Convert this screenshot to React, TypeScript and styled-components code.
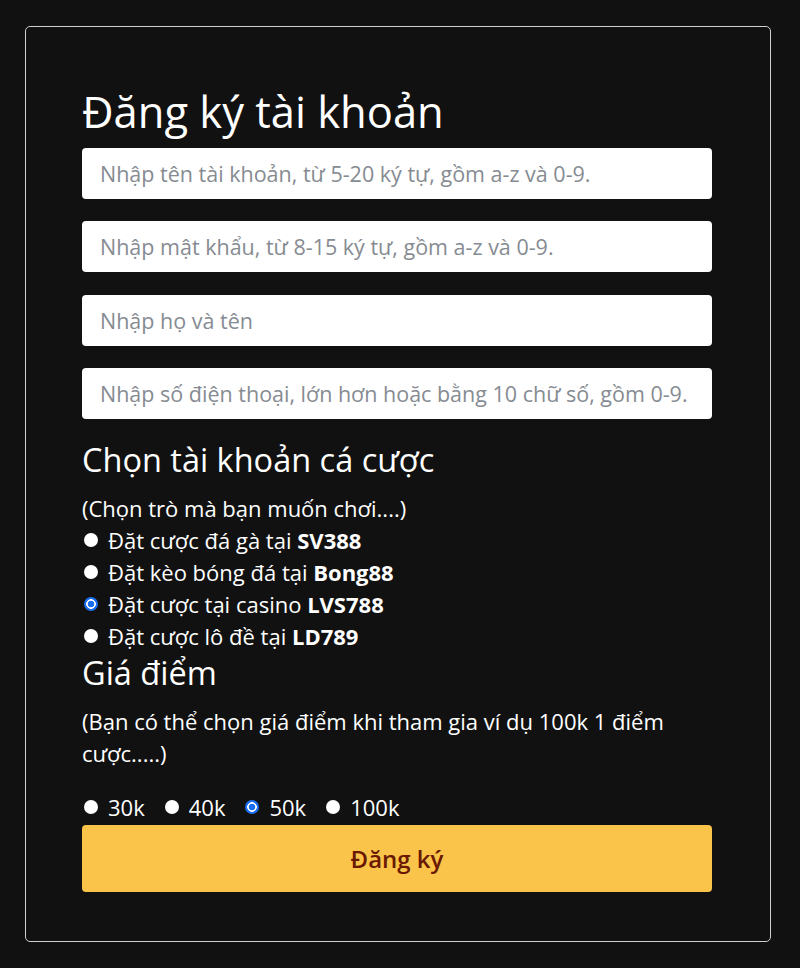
import styled, { createGlobalStyle } from "styled-components";

const GlobalStyle = createGlobalStyle`
    body {
        margin: 0;
        background-color: #111111;
        font-family: "Open Sans", "Noto Sans", sans-serif;
        color: #ffffff;
    }
`;

const Page = styled.div`
    padding: 26px 29px 27px 25px;
`;

const Card = styled.form`
    width: 746px;
    box-sizing: border-box;
    border: 1px solid #cfcfcf;
    border-radius: 5px;
    padding: 59px 58px 49px 56px;
    display: flex;
    flex-direction: column;
`;

const Title = styled.h1`
    margin: 0 0 9.5px;
    font-size: 43.5px;
    font-weight: 400;
    line-height: 1.2;
`;

const Field = styled.input`
    width: 100%;
    height: 51px;
    box-sizing: border-box;
    margin-bottom: 22.5px;
    padding: 0 18px;
    border: none;
    border-radius: 4px;
    background: #ffffff;
    font-family: inherit;
    font-size: 21.5px;
    color: #333;
    outline: none;

    &::placeholder {
        color: #868b92;
    }

    &:last-of-type {
        margin-bottom: 0;
    }
`;

const Heading = styled.h2<{ $gap: number }>`
    margin: ${(p) => p.$gap}px 0 0;
    font-size: 32.5px;
    font-weight: 400;
    line-height: 36px;
`;

const Note = styled.p<{ $gap: number }>`
    margin: ${(p) => p.$gap}px 0 0;
    font-size: 22px;
    line-height: 32px;
`;

const OptionList = styled.div`
    display: flex;
    flex-direction: column;
`;

const PriceRow = styled.div`
    display: flex;
    gap: 18px;
    margin-top: 22px;
`;

const Option = styled.label`
    display: flex;
    align-items: center;
    gap: 10px;
    font-size: 22px;
    line-height: 32px;
    padding-left: 2px;

    b {
        font-weight: 700;
    }
`;

const Radio = styled.input.attrs({ type: "radio" })`
    appearance: none;
    margin: 0;
    width: 14px;
    height: 14px;
    border-radius: 50%;
    background: #ffffff;
    flex-shrink: 0;

    &:checked {
        background: radial-gradient(
            circle,
            #1a6ff0 0 3.2px,
            #ffffff 3.6px 4.6px,
            #1a6ff0 5px
        );
    }
`;

const Submit = styled.button`
    margin-top: 2px;
    height: 67px;
    border: none;
    border-radius: 4px;
    background: #f9c449;
    color: #6a1904;
    font-family: inherit;
    font-size: 24px;
    font-weight: 600;
    cursor: pointer;
`;

const games = [
    { label: "Đặt cược đá gà tại", brand: "SV388" },
    { label: "Đặt kèo bóng đá tại", brand: "Bong88" },
    { label: "Đặt cược tại casino", brand: "LVS788" },
    { label: "Đặt cược lô đề tại", brand: "LD789" },
];

const prices = ["30k", "40k", "50k", "100k"];

const App = () => {
    return (
        <Page>
            <GlobalStyle />
            <Card onSubmit={(e) => e.preventDefault()}>
                <Title>Đăng ký tài khoản</Title>
                <Field placeholder="Nhập tên tài khoản, từ 5-20 ký tự, gồm a-z và 0-9." />
                <Field
                    type="password"
                    placeholder="Nhập mật khẩu, từ 8-15 ký tự, gồm a-z và 0-9."
                />
                <Field placeholder="Nhập họ và tên" />
                <Field placeholder="Nhập số điện thoại, lớn hơn hoặc bằng 10 chữ số, gồm 0-9." />

                <Heading $gap={23}>Chọn tài khoản cá cược</Heading>
                <Note $gap={14}>(Chọn trò mà bạn muốn chơi....)</Note>
                <OptionList>
                    {games.map((g) => (
                        <Option key={g.brand}>
                            <Radio
                                name="game"
                                defaultChecked={g.brand === "LVS788"}
                            />
                            <span>
                                {g.label} <b>{g.brand}</b>
                            </span>
                        </Option>
                    ))}
                </OptionList>

                <Heading $gap={3}>Giá điểm</Heading>
                <Note $gap={14}>
                    (Bạn có thể chọn giá điểm khi tham gia ví dụ 100k 1 điểm
                    cược.....)
                </Note>
                <PriceRow>
                    {prices.map((p) => (
                        <Option key={p}>
                            <Radio name="price" defaultChecked={p === "50k"} />
                            {p}
                        </Option>
                    ))}
                </PriceRow>

                <Submit type="submit">Đăng ký</Submit>
            </Card>
        </Page>
    );
};

export default App;
